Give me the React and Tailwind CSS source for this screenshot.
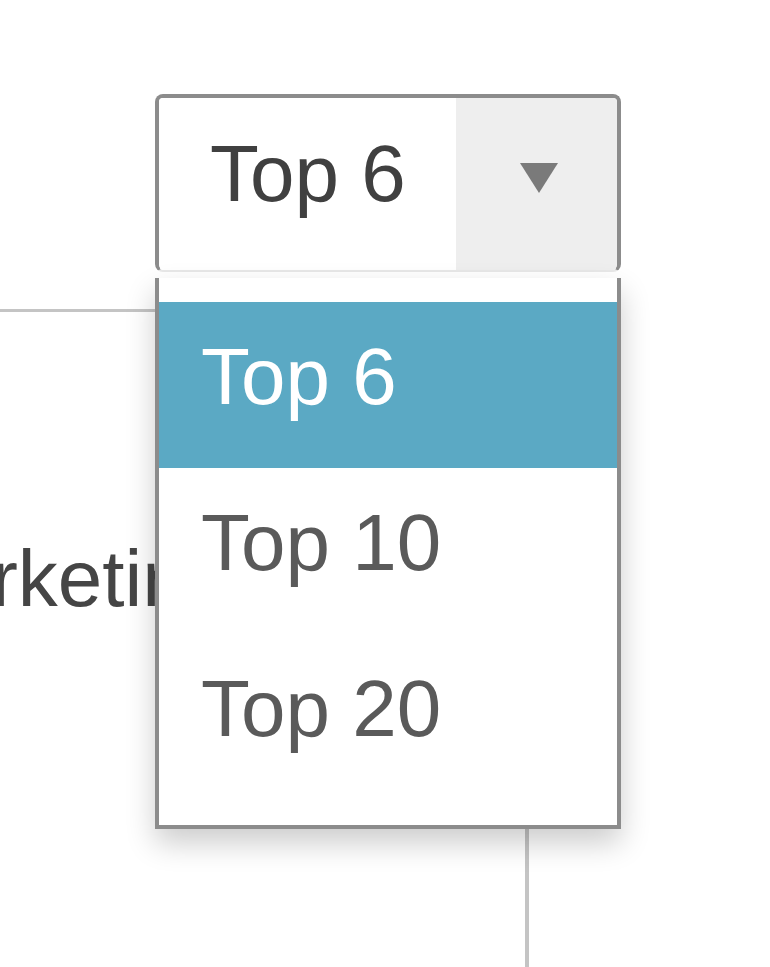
export default function App() {
  const items = ["Top 6", "Top 10", "Top 20"];
  return (
    <div className="relative w-[770px] h-[967px] overflow-hidden bg-white font-['Liberation_Sans',Helvetica,Arial,sans-serif]">
      {/* background chart content */}
      <div className="flex flex-col h-full">
        <div className="h-[309px] shrink-0" />
        <div className="w-[420px] h-[3px] bg-[#c4c4c4] shrink-0" />
        <div className="mt-[227px] ml-[-120px] text-[80px] leading-none text-[#454545] whitespace-nowrap shrink-0">
          Marketing
        </div>
        <div className="ml-[525px] w-[4px] flex-1 bg-[#c4c4c4]" />
      </div>

      {/* select overlay */}
      <div className="absolute left-[155px] top-[94px] w-[466px] flex flex-col">
        <div className="flex h-[178px] rounded-[8px] border-[4px] border-b-[2px] border-[#8c8c8c] border-b-[#e8e8e8] overflow-hidden">
          <div className="w-[297px] bg-white flex items-center pl-[51px] pb-[20px] text-[80px] leading-none text-[#404040]">
            Top 6
          </div>
          <div className="flex-1 bg-[#eeeeee] flex items-center justify-center pb-[12px] pl-[4px]">
            <svg width="38" height="30" viewBox="0 0 38 30">
              <polygon points="0,0 38,0 19,30" fill="#7a7a7a" />
            </svg>
          </div>
        </div>
        <div className="mt-[6px] flex flex-col bg-white border-[4px] border-t-0 border-[#8c8c8c] pt-[24px] pb-[25px] shadow-[0_14px_28px_rgba(0,0,0,0.2)]">
          {items.map((it, i) => (
            <div
              key={it}
              className={
                i === 0
                  ? "h-[166px] flex items-center pl-[42px] pb-[16px] text-[80px] leading-none bg-[#5ba9c4] text-white"
                  : "h-[166px] flex items-center pl-[42px] pb-[16px] text-[80px] leading-none text-[#5a5a5a]"
              }
            >
              {it}
            </div>
          ))}
        </div>
      </div>
    </div>
  );
}
